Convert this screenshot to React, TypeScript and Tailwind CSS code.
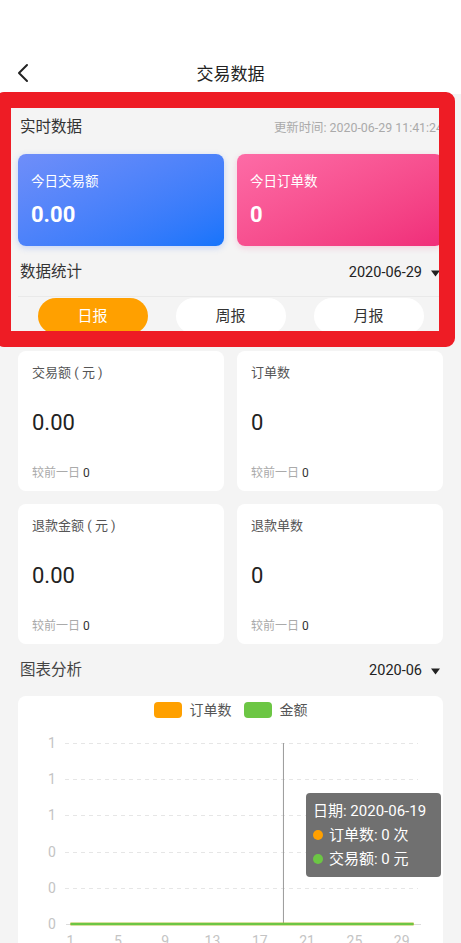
import React from "react";

const font = { fontFamily: "Roboto, 'Noto Sans CJK SC', 'Noto Sans', sans-serif" };

function Triangle() {
  return (
    <svg width="9" height="7" viewBox="0 0 9 7" className="ml-[9px]">
      <path d="M0 0.5 L9 0.5 L4.5 6.5 Z" fill="#222" />
    </svg>
  );
}

function StatCard({ label, value }: { label: string; value: string }) {
  return (
    <div className="h-[140px] rounded-[8px] bg-white px-[14px] pt-[12px] flex flex-col">
      <div className="h-[20px] leading-[20px] text-[13px] text-[#555]">{label}</div>
      <div className="mt-[25px] h-[30px] leading-[30px] text-[22px] text-[#222]">{value}</div>
      <div className="mt-[26px] h-[18px] leading-[18px] text-[12px] text-[#aaa]">
        较前一日 <span className="text-[#333]">0</span>
      </div>
    </div>
  );
}

function Chart() {
  const ys = [47, 83, 119, 156, 192, 228];
  const ylabels = ["1", "1", "1", "0", "0", "0"];
  const xs = [1, 5, 9, 13, 17, 21, 25, 29];
  const dx = (d: number) => 52.5 + (d - 1) * 11.83;
  return (
    <svg width="425" height="260" className="absolute left-0 top-0">
      {ys.map((y, i) => (
        <g key={i}>
          <text x="34" y={y + 5} textAnchor="middle" fontSize="14" fill="#c4c4c4" style={font}>
            {ylabels[i]}
          </text>
          {i < 5 && (
            <line x1="47" x2="400" y1={y + 0.5} y2={y + 0.5} stroke="#e6e6e6" strokeWidth="1" strokeDasharray="4 4" />
          )}
        </g>
      ))}
      <line x1="48" x2="403" y1="228.5" y2="228.5" stroke="#dcdcdc" strokeWidth="1" />
      <line x1={dx(19)} x2={dx(19)} y1="47" y2="228" stroke="#9a9a9a" strokeWidth="1" />
      <line x1={dx(1)} x2={dx(30)} y1="228" y2="228" stroke="#ffa000" strokeWidth="2.5" />
      <line x1={dx(1)} x2={dx(30)} y1="228" y2="228" stroke="#6cc644" strokeWidth="2.5" />
      {xs.map((d) => (
        <text key={d} x={dx(d)} y="250" textAnchor="middle" fontSize="14" fill="#c4c4c4" style={font}>
          {d}
        </text>
      ))}
    </svg>
  );
}

export default function App() {
  return (
    <div className="relative w-[461px] h-[943px] overflow-hidden bg-[#f4f4f4]" style={font}>
      {/* header */}
      <div className="h-[94px] bg-white relative">
        <div className="absolute left-0 right-0 top-[60px] h-[30px] flex items-center justify-center">
          <span className="text-[17px] text-[#222]">交易数据</span>
        </div>
        <svg width="14" height="20" viewBox="0 0 14 20" className="absolute left-[16px] top-[63px]">
          <path d="M11 2 L3 10 L11 18" fill="none" stroke="#222" strokeWidth="2" strokeLinecap="round" strokeLinejoin="round" />
        </svg>
      </div>

      <div className="px-[18px]">
        {/* realtime */}
        <div className="mt-[14px] h-[40px] flex items-center justify-between pl-[2px]">
          <span className="text-[15.5px] text-[#333]">实时数据</span>
          <span className="text-[12.4px] text-[#aaa] whitespace-nowrap">更新时间: 2020-06-29 11:41:24</span>
        </div>
        <div className="mt-[6px] grid grid-cols-2 gap-[13px]">
          <div className="h-[92px] rounded-[8px] bg-gradient-to-br from-[#6f8ef9] to-[#1474fb] shadow-[0_2px_6px_rgba(60,120,250,0.25)] px-[13px] pt-[17px] text-white">
            <div className="text-[13.5px] leading-[20px]">今日交易额</div>
            <div className="mt-[10px] text-[22px] font-bold leading-[28px]">0.00</div>
          </div>
          <div className="h-[92px] rounded-[8px] bg-gradient-to-br from-[#fd6ba6] to-[#f02c79] shadow-[0_2px_6px_rgba(240,60,130,0.2)] px-[13px] pt-[17px] text-white">
            <div className="text-[13.5px] leading-[20px]">今日订单数</div>
            <div className="mt-[10px] text-[22px] font-bold leading-[28px]">0</div>
          </div>
        </div>

        {/* stats header */}
        <div className="mt-[9px] h-[36px] flex items-center justify-between pl-[2px]">
          <span className="text-[15.5px] text-[#333]">数据统计</span>
          <span className="flex items-center text-[14.5px] text-[#222] pr-[3px]">
            2020-06-29
            <Triangle />
          </span>
        </div>
        <div className="mt-[5px] h-px bg-[#e9e9e9]" />
        <div className="mt-px flex justify-center gap-[28px]">
          <div className="w-[110px] h-[36px] rounded-full bg-[#ffa000] text-white text-[15px] flex items-center justify-center">日报</div>
          <div className="w-[110px] h-[36px] rounded-full bg-white text-[#333] text-[15px] flex items-center justify-center">周报</div>
          <div className="w-[110px] h-[36px] rounded-full bg-white text-[#333] text-[15px] flex items-center justify-center">月报</div>
        </div>

        {/* stat cards */}
        <div className="mt-[17px] grid grid-cols-2 gap-[13px]">
          <StatCard label="交易额 ( 元 )" value="0.00" />
          <StatCard label="订单数" value="0" />
          <StatCard label="退款金额 ( 元 )" value="0.00" />
          <StatCard label="退款单数" value="0" />
        </div>

        {/* chart header */}
        <div className="mt-[10px] h-[34px] flex items-center justify-between pl-[2px]">
          <span className="text-[15.5px] text-[#444]">图表分析</span>
          <span className="flex items-center text-[14.5px] text-[#222] pr-[3px]">
            2020-06
            <Triangle />
          </span>
        </div>

        {/* chart card */}
        <div className="relative mt-[8px] h-[260px] rounded-[8px] bg-white">
          <Chart />
          <div className="relative pt-[6px] flex justify-center items-center text-[14px] text-[#555]">
            <span className="w-[28px] h-[16px] rounded-[4px] bg-[#ffa000]" />
            <span className="ml-[8px] leading-[16px]">订单数</span>
            <span className="ml-[12px] w-[28px] h-[16px] rounded-[4px] bg-[#6cc644]" />
            <span className="ml-[8px] leading-[16px]">金额</span>
          </div>
          <div className="absolute left-[288px] top-[97px] w-[135px] h-[84px] rounded-[4px] bg-[#707070] px-[7px] pt-[6px] text-white text-[15px] leading-[24px] whitespace-nowrap">
            <div>日期: 2020-06-19</div>
            <div className="flex items-center">
              <span className="w-[10px] h-[10px] rounded-full bg-[#ffa000] mr-[6px]" />
              订单数: 0 次
            </div>
            <div className="flex items-center">
              <span className="w-[10px] h-[10px] rounded-full bg-[#6cc644] mr-[6px]" />
              交易额: 0 元
            </div>
          </div>
        </div>
      </div>

      {/* red annotation overlay */}
      <div className="absolute left-[-5px] top-[92px] w-[460px] h-[255px] border-[16px] border-[#ee1c25] rounded-[9px]" />
    </div>
  );
}
